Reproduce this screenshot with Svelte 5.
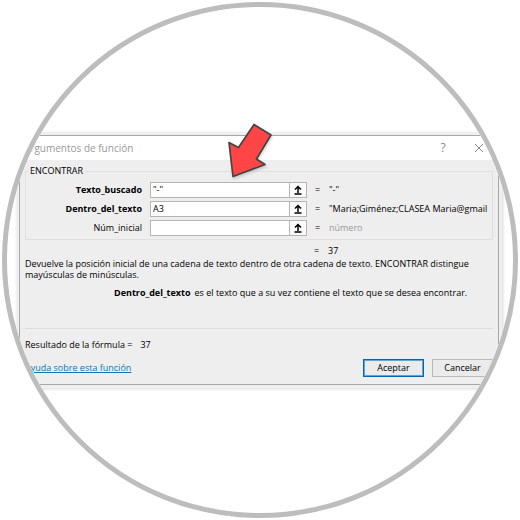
<script lang="ts">
	type Argument = {
		id: string;
		name: string;
		value: string;
		result: string;
		optional?: boolean;
	};

	let args: Argument[] = $state([
		{ id: 'find', name: 'Texto_buscado', value: '"-"', result: '"-"' },
		{
			id: 'within',
			name: 'Dentro_del_texto',
			value: 'A3',
			result: '"Maria;Giménez;CLASEA Maria@gmail'
		},
		{ id: 'start', name: 'Núm_inicial', value: '', result: 'número', optional: true }
	]);
	const total = 37;
</script>

<main class="lens">
	<div class="dialog" role="dialog" aria-labelledby="title">
		<header>
			<h1 id="title">Argumentos de función</h1>
			<button class="caption" type="button">?</button>
			<button class="caption" type="button" aria-label="Cerrar">
				<svg viewBox="0 0 10 10" width="10" height="10">
					<path d="M1 1l8 8M9 1l-8 8" fill="none" stroke="#8a8a8a" />
				</svg>
			</button>
		</header>

		<form onsubmit={(e) => e.preventDefault()}>
			<fieldset>
				<legend>ENCONTRAR</legend>
				{#each args as arg (arg.id)}
					<div class="row">
						<label for={arg.id} class:optional={arg.optional}>{arg.name}</label>
						<div class="field">
							<input id={arg.id} type="text" autocomplete="off" bind:value={arg.value} />
							<button type="button" aria-label="Contraer {arg.name}">
								<svg viewBox="0 0 10 10" width="10" height="10">
									<path
										d="M5 8V2M2 4.5l3-3 3 3M1.500 9h7"
										fill="none"
										stroke="#000"
										stroke-width="1.500"
									/>
								</svg>
							</button>
						</div>
						<span>=</span>
						<output for={arg.id} class:muted={arg.optional}>{arg.result}</output>
					</div>
				{/each}
			</fieldset>

			<div class="row total">
				<span>=</span>
				<output>{total}</output>
			</div>

			<p class="about">
				Devuelve la posición inicial de una cadena de texto dentro de otra cadena de texto.
				ENCONTRAR distingue mayúsculas de minúsculas.
			</p>
			<p class="hint">
				<strong>Dentro_del_texto</strong>
				<span>es el texto que a su vez contiene el texto que se desea encontrar.</span>
			</p>

			<p class="result"><span>Resultado de la fórmula =</span> <output>{total}</output></p>

			<footer>
				<a href="#ayuda">Ayuda sobre esta función</a>
				<button class="primary" type="submit">Aceptar</button>
				<button type="button">Cancelar</button>
			</footer>
		</form>

		<svg class="arrow" viewBox="0 0 48 60" width="48" height="60" aria-hidden="true">
			<path
				d="M30 4.500L47 15 32.500 39 41 44.500 9 56.500 5 22.500 14.500 27.500Z"
				fill="#ff4545"
				stroke="#444"
				stroke-width="1.700"
				stroke-linejoin="round"
			/>
		</svg>
	</div>
</main>

<style>
	:global(body) {
		margin: 0;
		background: #fff;
	}

	.lens {
		box-sizing: border-box;
		display: flex;
		align-items: center;
		aspect-ratio: 1;
		margin: 2px;
		padding: 0 14px 0 12px;
		border: 5px solid #bdbdbd;
		border-radius: 50%;
		overflow: hidden;
		color: #000;
		font: 9px/12px 'Open Sans', 'Noto Sans', sans-serif;
	}

	.dialog {
		position: relative;
		flex: 1;
		min-width: 0;
		border: 1px solid #a8a8a8;
		background: #eee;
		box-shadow:
			0 0 0 3px #efefef,
			1px 1px 3px 3px #d8d8d8;
	}

	header {
		display: flex;
		align-items: center;
		height: 24px;
		padding: 0 13px 0 4px;
		background: #fff;
	}

	h1 {
		flex: 1;
		margin: 0;
		color: #999;
		font-size: 10px;
		font-weight: 400;
	}

	button,
	input {
		box-sizing: border-box;
		margin: 0;
		color: inherit;
		font: inherit;
	}

	.caption {
		display: flex;
		justify-content: center;
		width: 12px;
		margin-left: 24px;
		padding: 0;
		border: 0;
		background: none;
		color: #8a8a8a;
		font-size: 12px;
	}

	form {
		padding: 5px 5px 7px;
	}

	fieldset {
		min-width: 0;
		margin: 0;
		padding: 5px 0 0;
		border: 1px solid #e0e0e0;
	}

	legend {
		margin-left: 2px;
		padding: 0 2px;
	}

	.row {
		display: grid;
		grid-template-columns: 116px 157px 6px minmax(0, 1fr);
		column-gap: 8px;
		align-items: center;
		margin-bottom: 3px;
		white-space: nowrap;
	}

	label,
	strong {
		font-weight: 700;
	}

	label {
		text-align: right;
	}

	label.optional {
		font-weight: 400;
	}

	.field {
		display: flex;
		height: 16px;
		box-sizing: border-box;
		border: 1px solid #b4b4b4;
		background: #fff;
	}

	.field input {
		flex: 1;
		min-width: 0;
		padding: 0 2px;
		border: 0;
		background: none;
		outline: 0;
	}

	.field button {
		display: flex;
		align-items: center;
		justify-content: center;
		width: 17px;
		padding: 0;
		border: 0;
		border-left: 1px solid #b4b4b4;
		background: #fafafa;
	}

	.muted {
		color: #999;
	}

	.total {
		margin: 5px 0 1px;
	}

	.total span {
		grid-column: 3;
	}

	p {
		margin: 0;
	}

	.about {
		line-height: 11px;
	}

	.hint {
		display: flex;
		gap: 4px;
		padding: 7px 0 29px 89px;
		border-bottom: 1px solid #dedede;
		white-space: nowrap;
	}

	.result {
		display: flex;
		gap: 8px;
		padding-top: 10px;
	}

	footer {
		display: flex;
		align-items: center;
		gap: 8px;
		margin-top: 8px;
	}

	footer a {
		margin-right: auto;
		color: #0a78b8;
	}

	footer button {
		width: 61px;
		height: 18px;
		padding: 0;
		border: 1px solid #b8b8b8;
		background: #ebebeb;
	}

	footer .primary {
		border-color: #0067b0;
		outline: 1px solid #5fa5d8;
		outline-offset: -2px;
	}

	.arrow {
		position: absolute;
		top: -16px;
		left: 204px;
		filter: drop-shadow(1px 2px 1px #0002);
	}
</style>
